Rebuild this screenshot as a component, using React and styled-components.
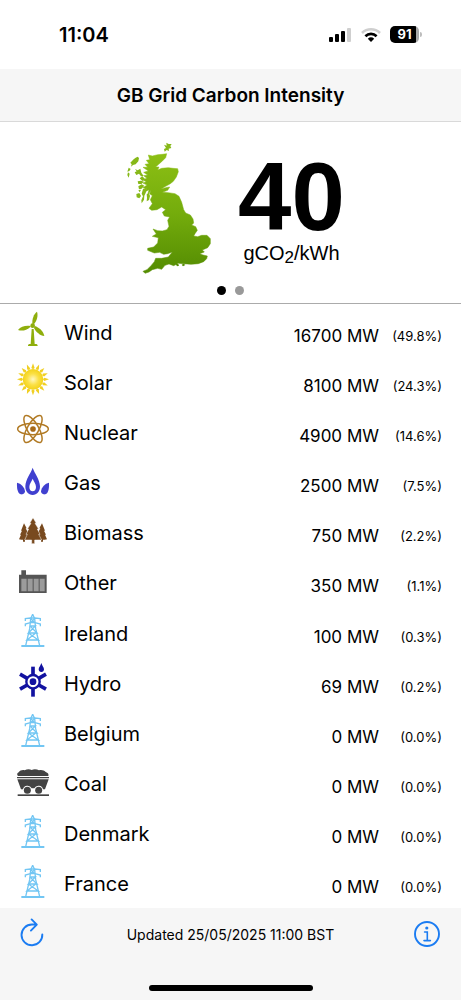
import React from "react";
import styled, { createGlobalStyle } from "styled-components";

const GlobalStyle = createGlobalStyle`
  *, *::before, *::after { box-sizing: border-box; }
  body {
    margin: 0;
    background: #fff;
    color: #000;
    font-family: Inter, "Liberation Sans", sans-serif;
  }
`;

const Screen = styled.div`
  display: flex;
  flex-direction: column;
  min-height: 100vh;
`;

const StatusBar = styled.div`
  display: flex;
  align-items: center;
  justify-content: space-between;
  height: 69px;
  padding: 0 39px 0 59px;
`;

const Clock = styled.time`
  font-size: 20px;
  font-weight: 600;
  line-height: 24px;
`;

const StatusIcons = styled.div`
  display: flex;
  align-items: center;
  gap: 9px;
`;

const BatteryShell = styled.div`
  display: flex;
  align-items: center;
  gap: 1px;

  &::after {
    content: "";
    width: 2px;
    height: 5px;
    border-radius: 0 2px 2px 0;
    background: #bdbdbd;
  }
`;

const BatteryLevel = styled.div`
  width: 29px;
  height: 17px;
  border-radius: 5px;
  background: linear-gradient(90deg, #000 91%, #a8a8a8 91%);
  color: #fff;
  font-size: 13px;
  font-weight: 700;
  line-height: 17px;
  text-align: center;
`;

const TitleBar = styled.header`
  display: flex;
  align-items: center;
  justify-content: center;
  height: 53px;
  padding-top: 2px;
  background: #f6f6f6;
  border-bottom: 1px solid #d9d9d9;
`;

const Title = styled.h1`
  margin: 0;
  font-size: 19px;
  font-weight: 600;
  line-height: 24px;
`;

const Hero = styled.section`
  display: flex;
  flex-direction: column;
  align-items: center;
  height: 182px;
  padding-top: 20px;
  border-bottom: 1px solid #ababab;
`;

const Summary = styled.div`
  display: flex;
  gap: 26px;
`;

const Reading = styled.p`
  display: flex;
  flex-direction: column;
  align-items: center;
  margin: 0;
  padding-top: 10px;
  font-family: "Liberation Sans", Arial, sans-serif;
`;

const Value = styled.strong`
  font-size: 96px;
  line-height: 90px;
`;

const Unit = styled.span`
  font-size: 20px;
  line-height: 22px;

  sub {
    font-size: 17px;
    line-height: 1;
    vertical-align: -3px;
  }
`;

const Pager = styled.div`
  display: flex;
  gap: 9px;
  margin-top: 10px;
`;

const PageDot = styled.button`
  width: 9px;
  height: 9px;
  padding: 0;
  border: 0;
  border-radius: 50%;
  background: ${(p) => (p.$active ? "#000" : "#999")};
`;

const SourceTable = styled.table`
  display: flex;
  flex: 1;
  padding-bottom: 2px;
`;

const SourceBody = styled.tbody`
  display: flex;
  flex: 1;
  flex-direction: column;
`;

const SourceRow = styled.tr`
  display: flex;
  flex: 1;
  align-items: center;
  min-height: 50px;
  padding: 0 19px 0 15px;
`;

const IconCell = styled.td`
  display: flex;
  width: 36px;
  padding: 0;
`;

const SourceName = styled.th`
  flex: 1;
  padding: 7px 0 0 13px;
  font-size: 20px;
  font-weight: 400;
  line-height: 24px;
  text-align: left;
`;

const Figure = styled.td`
  min-width: ${(p) => (p.$small ? "63px" : "0")};
  padding: 13px 0 0;
  font-size: ${(p) => (p.$small ? "13px" : "17px")};
  line-height: 24px;
  text-align: right;
`;

const Footer = styled.footer`
  display: flex;
  flex-direction: column;
  align-items: center;
  justify-content: space-between;
  height: 92px;
  padding: 8px 20px 9px;
  background: #f6f6f6;
`;

const Toolbar = styled.div`
  display: flex;
  align-items: center;
  justify-content: space-between;
  width: 100%;
`;

const ToolButton = styled.button`
  display: flex;
  padding: 0;
  border: 0;
  background: none;
  color: #1b7cf2;
`;

const Updated = styled.p`
  margin: 0;
  padding: 2px 0 0 4px;
  font-size: 14px;
  line-height: 20px;
`;

const HomeIndicator = styled.div`
  width: 164px;
  height: 6px;
  border-radius: 3px;
  background: #000;
`;

const Glyph = ({ children }) => (
  <svg width="36" height="36" viewBox="0 0 108 108" aria-hidden="true">
    {children}
  </svg>
);

const WindIcon = () => (
  <Glyph>
    <g fill="#8fae0c">
      <path d="M52 38C51 24 56 9 66 2c4 12 0 26-9 37z" />
      <path d="M47 47C35 58 21 61 9 57c8-10 22-14 37-12z" />
      <path d="M59 45c13 4 26 15 29 30-13-1-25-12-31-24z" />
      <circle cx="53" cy="44" r="7" />
      <path d="M50 54h6l3 45h5c3 1 4 3 4 6H39c0-3 1-5 4-6h4z" />
    </g>
  </Glyph>
);

const SolarIcon = () => (
  <Glyph>
    <defs>
      <radialGradient id="sun">
        <stop offset="0" stopColor="#fff7c0" />
        <stop offset="0.55" stopColor="#fbe044" />
        <stop offset="1" stopColor="#f3d21a" />
      </radialGradient>
    </defs>
    <g fill="#f0cf22">
      {Array.from({ length: 16 }, (_, i) => (
        <path key={i} d="M54 7l5 14-5 4-5-4z" transform={`rotate(${i * 22.5} 54 55)`} />
      ))}
    </g>
    <circle cx="54" cy="55" r="31" fill="url(#sun)" />
  </Glyph>
);

const NuclearIcon = () => (
  <Glyph>
    <g fill="none" stroke="#b17a24" strokeWidth="4.5">
      {[0, 60, 120].map((a) => (
        <ellipse key={a} cx="54" cy="54" rx="46" ry="17" transform={`rotate(${a} 54 54)`} />
      ))}
    </g>
    <circle cx="54" cy="54" r="8.5" fill="#a86a18" />
  </Glyph>
);

const GasIcon = () => (
  <Glyph>
    <g fill="#4040cf">
      <path
        fillRule="evenodd"
        d="M53 17c6 18 21 34 22 56 0 16-9 26-22 26S31 89 31 73c1-22 16-38 22-56zm0 33c-3 9-10 15-10 25 0 8 4 13 10 13s10-5 10-13c0-10-7-16-10-25z"
      />
      <path d="M6 62c12 3 22 12 24 26 0 7-6 10-12 9C9 95 5 82 6 62z" />
      <path d="M102 62c-12 3-22 12-24 26 0 7 6 10 12 9 9-2 13-15 12-35z" />
    </g>
  </Glyph>
);

const BiomassIcon = () => (
  <Glyph>
    <g fill="#784a1f">
      <path d="M27 34l8 15h-3l7 13h-3l6 12-3 6H30v9h-6v-6h-5l-7-1 6-14h-3l6-12h-3z" />
      <path d="M81 34l-8 15h3l-7 13h3l-6 12 3 6h9v9h6v-6h5l7-1-6-14h3l-6-12h3z" />
    </g>
    <path
      d="M54 17l10 17h-4l11 17h-4l8 16h-4l9 17H59v11H50V84H29l8-17h-4l8-16h-4l11-17h-4z"
      fill="#784a1f"
      stroke="#fff"
      strokeWidth="1.5"
    />
  </Glyph>
);

const OtherIcon = () => (
  <Glyph>
    <path d="M19 25h14v13h62v55H12V38h7z" fill="#555" />
    <path d="M19 50h16v38H19zM38 50h15v38H38zM56 50h15v38H56zM74 50h15v38H74z" fill="#9b9b9b" />
  </Glyph>
);

const PylonIcon = () => (
  <Glyph>
    <g fill="none" stroke="#72c6f3" strokeWidth="4">
      <path d="M53 7L47 20 44 50 32 101M53 7l6 13 3 30 12 51" />
      <path d="M31 27v-7l16-2h12l17 2v7M31 43v-7l15-4h14l16 4v7M47 20l13 12M59 20L46 32" />
      <path d="M45 42h16L40 63h26L45 42M40 63l30 21H36l26-21M36 84h34" />
    </g>
    <path d="M19 102h69" stroke="#72c6f3" strokeWidth="6" />
  </Glyph>
);

const HydroIcon = () => (
  <Glyph>
    <g stroke="#1212a0" fill="none">
      {[0, 60, 120, 180, 240, 300].map((a) => (
        <path key={a} d="M54 39V14" strokeWidth="11" transform={`rotate(${a} 54 59)`} />
      ))}
      <circle cx="54" cy="59" r="20" strokeWidth="7" />
    </g>
    <circle cx="54" cy="59" r="10" fill="#1212a0" />
    <path d="M79 3c2 8 8 13 8 19 0 5-3 8-8 8s-8-3-8-8c0-6 6-11 8-19z" fill="#1212a0" />
  </Glyph>
);

const CoalIcon = () => (
  <Glyph>
    <g fill="#434343">
      <path d="M9 39c-4-4-3-9 2-11 4-6 12-8 18-6 7-4 15-4 21-1 8-4 16-2 22 1 8-2 15 0 20 5 7 2 10 7 8 12z" />
      <path d="M6 42h96v4H6zM7 49h94L90 79h-6a14 14 0 0 0-26-3h-8a14 14 0 0 0-26 3h-6z" />
      <circle cx="37" cy="82" r="10.5" />
      <circle cx="71" cy="82" r="10.5" />
      <path d="M8 94h94v5H8z" />
    </g>
  </Glyph>
);

const BritainMap = () => (
  <svg width="96" height="134" viewBox="3 37 288 402" role="img" aria-label="Map of Great Britain">
    <defs>
      <linearGradient id="land" x1="0" y1="0" x2="0" y2="1">
        <stop offset="0" stopColor="#8cbf14" />
        <stop offset="0.5" stopColor="#74ac0c" />
        <stop offset="1" stopColor="#548c02" />
      </linearGradient>
    </defs>
    <path
      fill="url(#land)"
      stroke="url(#land)"
      strokeWidth="1.5"
      strokeLinejoin="round"
      d="M100 76L112 79 128 75 142 74 155 72 152 84 140 96 131 104 122 112 132 112 128 121 140 116 160 114 174 116 188 117 190 126 184 142 175 155 166 162 152 170 138 178 152 174 164 172 158 182 142 188 160 189 180 192 192 200 200 218 206 240 212 250 226 256 234 268 236 280 230 286 242 291 247 302 240 312 236 319 248 321 260 317 276 317 286 327 286 342 278 354 262 361 268 367 254 372 264 376 277 379 275 387 266 396 250 402 228 404 205 402 190 401 176 408 162 403 150 407 140 419 128 416 112 420 102 427 90 431 84 425 96 420 108 408 118 396 122 386 140 386 160 382 172 367 158 372 146 374 134 368 118 370 98 362 98 356 116 352 128 340 130 324 112 320 124 313 114 298 128 303 142 304 156 300 162 290 158 272 164 262 148 259 142 248 152 240 140 232 126 240 110 242 102 236 112 222 106 210 112 198 104 192 108 182 98 196 102 180 90 186 96 176 84 174 96 166 84 160 94 156 82 150 96 146 86 138 98 136 86 128 100 124 84 113 98 113 90 104 102 102 94 92 104 90z"
    />
    <g fill="#86b818">
      <path d="M147 45l8 3-1-9 7 4 9 0-4 6 3 6-8 2 1 7-7-3-6 5-2-8 6-3z" />
      <path d="M68 81l4 4-2 10-8 9-8 2-6 5 2-7-4-5 10-10 6-5zM41 114l6 4-4 6-6 2zM39 128l5 4-3 12-4-8z" />
      <path d="M60 118l8 4 8-5 3 12 7 10-8 1-6-8-8 4-5-8 6-3zM82 140l8 8-8 6-8-8z" />
      <path d="M68 155l10-2 9 3-8 7-9 0zM70 170l10-6 8 4-8 9-8 2zM64 193l9-3 5 9-5 7-8-3z" />
      <path d="M84 178l14-6-6 18-4 8-1 12-7 11-1-9 5-12-4-8zM95 194l7-4 3 9-3 12-7 4 1-11zM70 182l8-2-4 8z" />
    </g>
    <path d="M182 403l8 0 2 5-6 2zM200 405l6-3 5 4-7 4z" fill="#548c02" />
  </svg>
);

const SignalIcon = () => (
  <svg width="24" height="16" viewBox="0 0 24 16" aria-hidden="true">
    <rect x="1" y="10" width="4" height="5" rx="1" />
    <rect x="7" y="7" width="4" height="8" rx="1" />
    <rect x="13" y="4" width="4" height="11" rx="1" />
    <rect x="19" y="1" width="4" height="14" rx="1" fill="#cfcfcf" />
  </svg>
);

const WifiIcon = () => (
  <svg width="20" height="16" viewBox="0 0 20 16" aria-hidden="true">
    <g fill="none" strokeWidth="2.6">
      <path d="M1 6a12.8 12.8 0 0 1 18 0" stroke="#cfcfcf" />
      <path d="M4.4 9.2a8 8 0 0 1 11.2 0" stroke="#000" />
    </g>
    <path d="M6.8 11.7a4.8 4.8 0 0 1 6.4 0L10 15z" />
  </svg>
);

const RefreshIcon = () => (
  <svg width="24" height="36" viewBox="0 0 24 36" fill="none" stroke="currentColor" strokeWidth="1.9" strokeLinecap="round" strokeLinejoin="round" aria-hidden="true">
    <path d="M22.3 18.4A10.4 10.4 0 1 1 12 8.5h4.6M11.6 3.4l5.2 5.2-5.9 6" />
  </svg>
);

const InfoIcon = () => (
  <svg width="28" height="36" viewBox="0 0 28 36" fill="none" stroke="currentColor" strokeWidth="1.9" aria-hidden="true">
    <circle cx="14" cy="18" r="12" />
    <path d="M11.6 16h2.7v8.4M11 24.6h6.4" strokeWidth="1.6" strokeLinecap="round" />
    <circle cx="13.8" cy="12" r="1.6" fill="currentColor" stroke="none" />
  </svg>
);

const sources = [
  { name: "Wind", power: "16700 MW", share: "(49.8%)", Icon: WindIcon },
  { name: "Solar", power: "8100 MW", share: "(24.3%)", Icon: SolarIcon },
  { name: "Nuclear", power: "4900 MW", share: "(14.6%)", Icon: NuclearIcon },
  { name: "Gas", power: "2500 MW", share: "(7.5%)", Icon: GasIcon },
  { name: "Biomass", power: "750 MW", share: "(2.2%)", Icon: BiomassIcon },
  { name: "Other", power: "350 MW", share: "(1.1%)", Icon: OtherIcon },
  { name: "Ireland", power: "100 MW", share: "(0.3%)", Icon: PylonIcon },
  { name: "Hydro", power: "69 MW", share: "(0.2%)", Icon: HydroIcon },
  { name: "Belgium", power: "0 MW", share: "(0.0%)", Icon: PylonIcon },
  { name: "Coal", power: "0 MW", share: "(0.0%)", Icon: CoalIcon },
  { name: "Denmark", power: "0 MW", share: "(0.0%)", Icon: PylonIcon },
  { name: "France", power: "0 MW", share: "(0.0%)", Icon: PylonIcon },
];

export default function App() {
  return (
    <Screen>
      <GlobalStyle />
      <StatusBar>
        <Clock>11:04</Clock>
        <StatusIcons>
          <SignalIcon />
          <WifiIcon />
          <BatteryShell>
            <BatteryLevel>91</BatteryLevel>
          </BatteryShell>
        </StatusIcons>
      </StatusBar>
      <TitleBar>
        <Title>GB Grid Carbon Intensity</Title>
      </TitleBar>
      <Hero>
        <Summary>
          <BritainMap />
          <Reading>
            <Value>40</Value>
            <Unit>
              gCO<sub>2</sub>/kWh
            </Unit>
          </Reading>
        </Summary>
        <Pager>
          <PageDot type="button" $active aria-label="Page 1" />
          <PageDot type="button" aria-label="Page 2" />
        </Pager>
      </Hero>
      <SourceTable>
        <SourceBody>
          {sources.map(({ name, power, share, Icon }) => (
            <SourceRow key={name}>
              <IconCell>
                <Icon />
              </IconCell>
              <SourceName scope="row">{name}</SourceName>
              <Figure>{power}</Figure>
              <Figure $small>{share}</Figure>
            </SourceRow>
          ))}
        </SourceBody>
      </SourceTable>
      <Footer>
        <Toolbar>
          <ToolButton type="button" aria-label="Refresh">
            <RefreshIcon />
          </ToolButton>
          <Updated>Updated 25/05/2025 11:00 BST</Updated>
          <ToolButton type="button" aria-label="Information">
            <InfoIcon />
          </ToolButton>
        </Toolbar>
        <HomeIndicator />
      </Footer>
    </Screen>
  );
}
